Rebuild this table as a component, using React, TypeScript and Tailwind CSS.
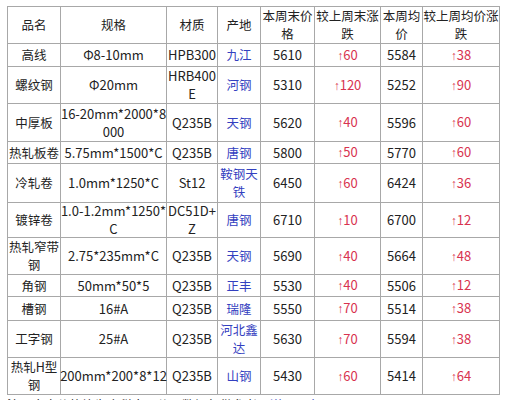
const cols = 'grid-cols-[52px_105px_50px_42px_53px_65px_41px_76px]';

type Row = { h: string; cells: string[][] };

const head: Row = {
  h: 'h-[36px]',
  cells: [['品名'], ['规格'], ['材质'], ['产地'], ['本周末价', '格'], ['较上周末涨', '跌'], ['本周均', '价'], ['较上周均价涨', '跌']],
};

const rows: Row[] = [
  { h: 'h-[22px]', cells: [['高线'], ['Φ8-10mm'], ['HPB300'], ['九江'], ['5610'], ['↑60'], ['5584'], ['↑38']] },
  { h: 'h-[36px]', cells: [['螺纹钢'], ['Φ20mm'], ['HRB400', 'E'], ['河钢'], ['5310'], ['↑120'], ['5252'], ['↑90']] },
  { h: 'h-[37px]', cells: [['中厚板'], ['16-20mm*2000*8', '000'], ['Q235B'], ['天钢'], ['5620'], ['↑40'], ['5596'], ['↑60']] },
  { h: 'h-[21px]', cells: [['热轧板卷'], ['5.75mm*1500*C'], ['Q235B'], ['唐钢'], ['5800'], ['↑50'], ['5770'], ['↑60']] },
  { h: 'h-[38px]', cells: [['冷轧卷'], ['1.0mm*1250*C'], ['St12'], ['鞍钢天', '铁'], ['6450'], ['↑60'], ['6424'], ['↑36']] },
  { h: 'h-[34px]', cells: [['镀锌卷'], ['1.0-1.2mm*1250*', 'C'], ['DC51D+', 'Z'], ['唐钢'], ['6710'], ['↑10'], ['6700'], ['↑12']] },
  { h: 'h-[36px]', cells: [['热轧窄带', '钢'], ['2.75*235mm*C'], ['Q235B'], ['天钢'], ['5690'], ['↑40'], ['5664'], ['↑48']] },
  { h: 'h-[21px]', cells: [['角钢'], ['50mm*50*5'], ['Q235B'], ['正丰'], ['5530'], ['↑40'], ['5506'], ['↑12']] },
  { h: 'h-[23px]', cells: [['槽钢'], ['16#A'], ['Q235B'], ['瑞隆'], ['5550'], ['↑70'], ['5514'], ['↑38']] },
  { h: 'h-[36px]', cells: [['工字钢'], ['25#A'], ['Q235B'], ['河北鑫', '达'], ['5630'], ['↑70'], ['5594'], ['↑38']] },
  { h: 'h-[36px]', cells: [['热轧H型', '钢'], ['200mm*200*8*12'], ['Q235B'], ['山钢'], ['5430'], ['↑60'], ['5414'], ['↑64']] },
];

function cellColor(i: number, isHead: boolean) {
  if (isHead) return 'text-[#222]';
  if (i === 3) return 'text-[#3340c0]';
  if (i === 5 || i === 7) return 'text-[#d8334f]';
  return 'text-[#222]';
}

function Line({ text, latin }: { text: string; latin: boolean }) {
  if (text.startsWith('↑')) {
    return (
      <span className="text-[13px]">
        <span className="font-['Liberation_Sans',sans-serif] text-[12px]">↑</span>
        {text.slice(1)}
      </span>
    );
  }
  return <span className={latin ? 'text-[13px]' : ''}>{text}</span>;
}

export default function App() {
  return (
    <div className="w-[506px] h-[400px] overflow-hidden bg-white font-['Noto_Sans_CJK_SC','Noto_Sans',sans-serif] text-[12.5px] leading-[18px]">
      <div className="pl-[7px] pt-[6px]">
        <div className={`grid ${cols} gap-px p-px bg-[#a8a8a8] w-fit`}>
          {[head, ...rows].map((r, ri) =>
            r.cells.map((c, ci) => (
              <div
                key={`${ri}-${ci}`}
                className={`${r.h} bg-white flex flex-col items-center justify-center text-center whitespace-nowrap ${cellColor(ci, ri === 0)}`}
              >
                {c.map(line => (
                  <Line key={line} text={line} latin={ri > 0 && ci !== 0 && ci !== 3} />
                ))}
              </div>
            ))
          )}
        </div>
        {/* caption line, mostly cut off by the window */}
        <div className="mt-[1px] text-[#222] whitespace-nowrap">
          注：本表价格均为含税出厂价，数据仅供参考，<span className="text-[#3340c0]">详见原文</span>
        </div>
      </div>
    </div>
  );
}
